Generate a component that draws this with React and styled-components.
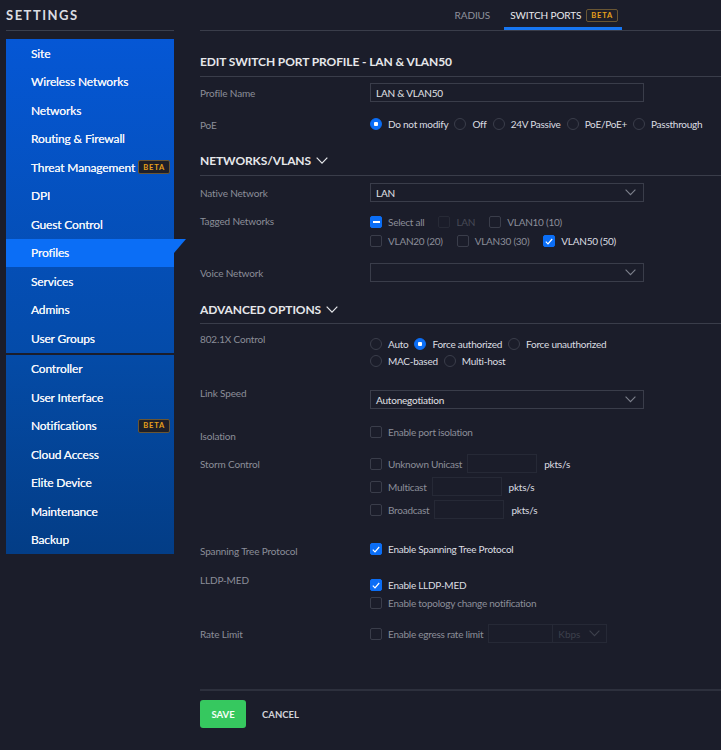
import React from 'react'
import styled, { createGlobalStyle } from 'styled-components'

const groupOne = ['Site', 'Wireless Networks', 'Networks', 'Routing & Firewall', 'Threat Management', 'DPI', 'Guest Control', 'Profiles', 'Services', 'Admins', 'User Groups']
const groupTwo = ['Controller', 'User Interface', 'Notifications', 'Cloud Access', 'Elite Device', 'Maintenance', 'Backup']
const betaItems = ['Threat Management', 'Notifications']

const Chevron = ({ size = 11, color = '#7d808c' }) => (
    <svg width={size} height={size * 0.6} viewBox="0 0 11 6.6" fill="none">
        <path d="M0.6 0.6 L5.5 5.6 L10.4 0.6" stroke={color} strokeWidth="1.1" />
    </svg>
)

const Check = ({ checked, mixed, disabled }) => (
    <Box $on={checked || mixed} $disabled={disabled}>
        {checked && (
            <svg width="8" height="7" viewBox="0 0 8 7" fill="none">
                <path d="M0.8 3.6 L3 5.8 L7.2 1" stroke="#fff" strokeWidth="1.2" />
            </svg>
        )}
        {mixed && <Dash />}
    </Box>
)

const CheckOption = ({ label, checked, mixed, disabled }) => (
    <Option>
        <Check checked={checked} mixed={mixed} disabled={disabled} />
        <OptionText $tone={disabled ? 'off' : checked ? 'on' : 'dim'}>{label}</OptionText>
    </Option>
)

const RadioOption = ({ label, checked }) => (
    <Option>
        <Radio $on={checked} />
        <OptionText $tone="on">{label}</OptionText>
    </Option>
)

const Select = ({ value }) => (
    <SelectBox>
        <span>{value}</span>
        <Chevron />
    </SelectBox>
)

const NavGroup = ({ items }) => (
    <Panel>
        {items.map(item => (
            <NavItem key={item} $active={item === 'Profiles'}>
                {item}
                {betaItems.includes(item) && <Beta>BETA</Beta>}
            </NavItem>
        ))}
    </Panel>
)

const App = () => {
    return (
        <Page>
            <Global />
            <Sidebar>
                <SideTitle>SETTINGS</SideTitle>
                <NavGroup items={groupOne} />
                <NavGroup items={groupTwo} />
            </Sidebar>
            <Main>
                <Tabs>
                    <Tab>RADIUS</Tab>
                    <Tab $active>SWITCH PORTS <Beta $small>BETA</Beta></Tab>
                </Tabs>

                <Heading $h={46}>EDIT SWITCH PORT PROFILE - LAN &amp; VLAN50</Heading>
                <Row $top={6} $align="center">
                    <Label>Profile Name</Label>
                    <TextInput>LAN &amp; VLAN50</TextInput>
                </Row>
                <Row $top={13} $align="center">
                    <Label $shift={3}>PoE</Label>
                    <Options $gap={6}>
                        <RadioOption label="Do not modify" checked />
                        <RadioOption label="Off" />
                        <RadioOption label="24V Passive" />
                        <RadioOption label="PoE/PoE+" />
                        <RadioOption label="Passthrough" />
                    </Options>
                </Row>

                <Heading $h={44}>NETWORKS/VLANS <Chevron size={12} color="#e6e7ea" /></Heading>
                <Row $top={7} $align="center">
                    <Label>Native Network</Label>
                    <Select value="LAN" />
                </Row>
                <Row $top={12}>
                    <Label>Tagged Networks</Label>
                    <Stack $gap={5} $pad={1}>
                        <Options $gap={14}>
                            <CheckOption label="Select all" mixed />
                            <CheckOption label="LAN" disabled />
                            <CheckOption label="VLAN10 (10)" />
                        </Options>
                        <Options $gap={14}>
                            <CheckOption label="VLAN20 (20)" />
                            <CheckOption label="VLAN30 (30)" />
                            <CheckOption label="VLAN50 (50)" checked />
                        </Options>
                    </Stack>
                </Row>
                <Row $top={15} $align="center">
                    <Label>Voice Network</Label>
                    <Select value="" />
                </Row>

                <Heading $h={42} $pb={6}>ADVANCED OPTIONS <Chevron size={12} color="#e6e7ea" /></Heading>
                <Row $top={8}>
                    <Label>802.1X Control</Label>
                    <Stack $gap={3} $pad={5}>
                        <Options $gap={6}>
                            <RadioOption label="Auto" />
                            <RadioOption label="Force authorized" checked />
                            <RadioOption label="Force unauthorized" />
                        </Options>
                        <Options $gap={6}>
                            <RadioOption label="MAC-based" />
                            <RadioOption label="Multi-host" />
                        </Options>
                    </Stack>
                </Row>
                <Row $top={22}>
                    <Label $shift={-4}>Link Speed</Label>
                    <Select value="Autonegotiation" />
                </Row>
                <Row $top={16}>
                    <Label $shift={4}>Isolation</Label>
                    <CheckOption label="Enable port isolation" />
                </Row>
                <Row $top={11}>
                    <Label $shift={3}>Storm Control</Label>
                    <Stack $gap={4}>
                        {['Unknown Unicast', 'Multicast', 'Broadcast'].map(name => (
                            <Inline key={name}>
                                <Check />
                                <OptionText $tone="dim">{name}</OptionText>
                                <RateInput />
                                <Unit>pkts/s</Unit>
                            </Inline>
                        ))}
                    </Stack>
                </Row>
                <Row $top={23}>
                    <Label $shift={2}>Spanning Tree Protocol</Label>
                    <CheckOption label="Enable Spanning Tree Protocol" checked />
                </Row>
                <Row $top={15}>
                    <Label>LLDP-MED</Label>
                    <Stack $gap={4} $pad={5}>
                        <CheckOption label="Enable LLDP-MED" checked />
                        <CheckOption label="Enable topology change notification" />
                    </Stack>
                </Row>
                <Row $top={14} $align="center">
                    <Label>Rate Limit</Label>
                    <Inline>
                        <Check />
                        <OptionText $tone="dim">Enable egress rate limit</OptionText>
                        <RateInput $w={64} $flat />
                        <UnitSelect>
                            <span>Kbps</span>
                            <Chevron color="#3d404c" />
                        </UnitSelect>
                    </Inline>
                </Row>

                <Footer>
                    <SaveButton>SAVE</SaveButton>
                    <CancelButton>CANCEL</CancelButton>
                </Footer>
            </Main>
        </Page>
    )
}

const Global = createGlobalStyle`
html, body {
    margin: 0;
    background: #1b1d2a;
}
body {
    font-family: Lato, "Open Sans", sans-serif;
    color: #d9dadf;
}
`
const Page = styled.div`
display: flex;
align-items: flex-start;
min-height: 750px;
padding-left: 6px;
background: #1b1d2a;
`
const Sidebar = styled.aside`
width: 168px;
flex-shrink: 0;
display: flex;
flex-direction: column;
gap: 2px;
`
const SideTitle = styled.div`
height: 29px;
display: flex;
align-items: center;
padding-bottom: 1px;
margin-bottom: 6px;
border-bottom: 1px solid #3a3f4d;
font-size: 13px;
font-weight: 700;
letter-spacing: 1.5px;
color: #dcdde2;
`
const Panel = styled.nav`
display: flex;
flex-direction: column;
background: linear-gradient(180deg, #0557d5 0%, #044ba9 100%);
&:last-child {
    background: linear-gradient(180deg, #044ba7 0%, #033d86 100%);
}
`
const NavItem = styled.div`
position: relative;
height: 28.5px;
display: flex;
align-items: center;
justify-content: space-between;
padding: 0 4px 0 25px;
font-size: 12px;
letter-spacing: -0.15px;
white-space: nowrap;
color: #f1f4fa;
text-shadow: 0 0 0.3px #f1f4fa;
background: ${p => (p.$active ? '#0b6ef6' : 'transparent')};
${p => p.$active && `
    &::after {
        content: '';
        position: absolute;
        left: 100%;
        top: 0;
        border-top: 14px solid #0b6ef6;
        border-right: 12px solid transparent;
    }
`}
`
const Beta = styled.span`
display: inline-flex;
align-items: center;
height: ${p => (p.$small ? 11 : 12)}px;
padding: 0 4px;
border: 1px solid #6a5633;
border-radius: 2px;
background: #1e1f28;
color: #e9a21b;
font-size: 7.5px;
font-weight: 700;
letter-spacing: 0.8px;
text-shadow: none;
margin-left: ${p => (p.$small ? 5 : 0)}px;
`
const Main = styled.main`
flex: 1;
margin-left: 26px;
display: flex;
flex-direction: column;
`
const Tabs = styled.div`
height: 30px;
display: flex;
justify-content: flex-end;
padding-right: 99px;
gap: 10px;
border-bottom: 1px solid #3a3d4a;
`
const Tab = styled.div`
display: flex;
align-items: center;
padding: 0 4px 0 6px;
font-size: 10px;
letter-spacing: -0.1px;
color: ${p => (p.$active ? '#e9eaee' : '#8f929d')};
box-shadow: ${p => (p.$active ? 'inset 0 -3px 0 #1776f2' : 'none')};
`
const Heading = styled.h2`
margin: 0;
height: ${p => p.$h}px;
box-sizing: border-box;
display: flex;
align-items: flex-end;
gap: 5px;
padding-bottom: ${p => p.$pb ?? 7}px;
border-bottom: 1px solid #3a3d4a;
font-size: 12px;
line-height: 14px;
font-weight: 700;
letter-spacing: -0.1px;
color: #e6e7ea;
svg {
    margin-bottom: 4px;
}
`
const Row = styled.div`
display: grid;
grid-template-columns: 170px 1fr;
align-items: ${p => p.$align || 'start'};
margin-top: ${p => p.$top}px;
`
const Label = styled.div`
font-size: 10px;
line-height: 14px;
letter-spacing: -0.15px;
color: #8b8e99;
margin-top: ${p => p.$shift || 0}px;
`
const TextInput = styled.div`
width: 274px;
height: 19px;
box-sizing: border-box;
display: flex;
align-items: center;
padding: 0 5px;
border: 1px solid #3a3d4a;
font-size: 10px;
letter-spacing: -0.2px;
color: #e1e2e6;
`
const SelectBox = styled(TextInput)`
justify-content: space-between;
padding-right: 7px;
`
const Stack = styled.div`
display: flex;
flex-direction: column;
gap: ${p => p.$gap}px;
padding-top: ${p => p.$pad || 0}px;
`
const Options = styled.div`
display: flex;
align-items: center;
gap: ${p => p.$gap}px;
`
const Option = styled.label`
display: flex;
align-items: center;
gap: 6px;
height: 14px;
`
const OptionText = styled.span`
font-size: 10px;
line-height: 14px;
letter-spacing: -0.25px;
white-space: nowrap;
color: ${p => (p.$tone === 'on' ? '#dcdde2' : p.$tone === 'off' ? '#474a56' : '#8b8e99')};
`
const Box = styled.span`
width: 12px;
height: 12px;
flex-shrink: 0;
box-sizing: border-box;
display: inline-flex;
align-items: center;
justify-content: center;
border-radius: 2px;
border: 1px solid ${p => (p.$on ? '#0b6ef6' : p.$disabled ? '#272a36' : '#3a3d4a')};
background: ${p => (p.$on ? '#0b6ef6' : 'transparent')};
`
const Dash = styled.span`
width: 7px;
height: 1.5px;
background: #fff;
`
const Radio = styled.span`
width: 12px;
height: 12px;
flex-shrink: 0;
box-sizing: border-box;
border-radius: 50%;
border: 1px solid ${p => (p.$on ? '#0b6ef6' : '#3a3d4a')};
background: ${p => (p.$on ? 'radial-gradient(circle, #fff 0 2px, #0b6ef6 2.5px)' : 'transparent')};
`
const Inline = styled.div`
display: flex;
align-items: center;
height: 19px;
gap: 6px;
`
const RateInput = styled.span`
width: ${p => p.$w || 70}px;
height: 19px;
box-sizing: border-box;
border: 1px solid #262936;
margin-left: -1px;
${p => p.$flat && 'border-right: none;'}
`
const Unit = styled.span`
font-size: 10px;
letter-spacing: -0.2px;
color: #dcdde2;
margin-left: 1px;
`
const UnitSelect = styled.span`
width: 55px;
height: 19px;
box-sizing: border-box;
display: flex;
align-items: center;
justify-content: space-between;
padding: 0 6px 0 5px;
margin-left: -6px;
border: 1px solid #262936;
font-size: 10px;
color: #3d404c;
`
const Footer = styled.div`
margin-top: 46px;
padding-top: 9px;
border-top: 2px solid #2d303d;
display: flex;
align-items: center;
gap: 16px;
`
const SaveButton = styled.button`
width: 46px;
height: 28px;
border: none;
border-radius: 3px;
background: #36c85f;
color: #f4fff7;
font-family: inherit;
font-size: 9.5px;
font-weight: 700;
padding: 0;
`
const CancelButton = styled.button`
border: none;
background: none;
padding: 0;
font-family: inherit;
font-size: 9.5px;
font-weight: 700;
color: #d3d4d9;
`
export default App;
